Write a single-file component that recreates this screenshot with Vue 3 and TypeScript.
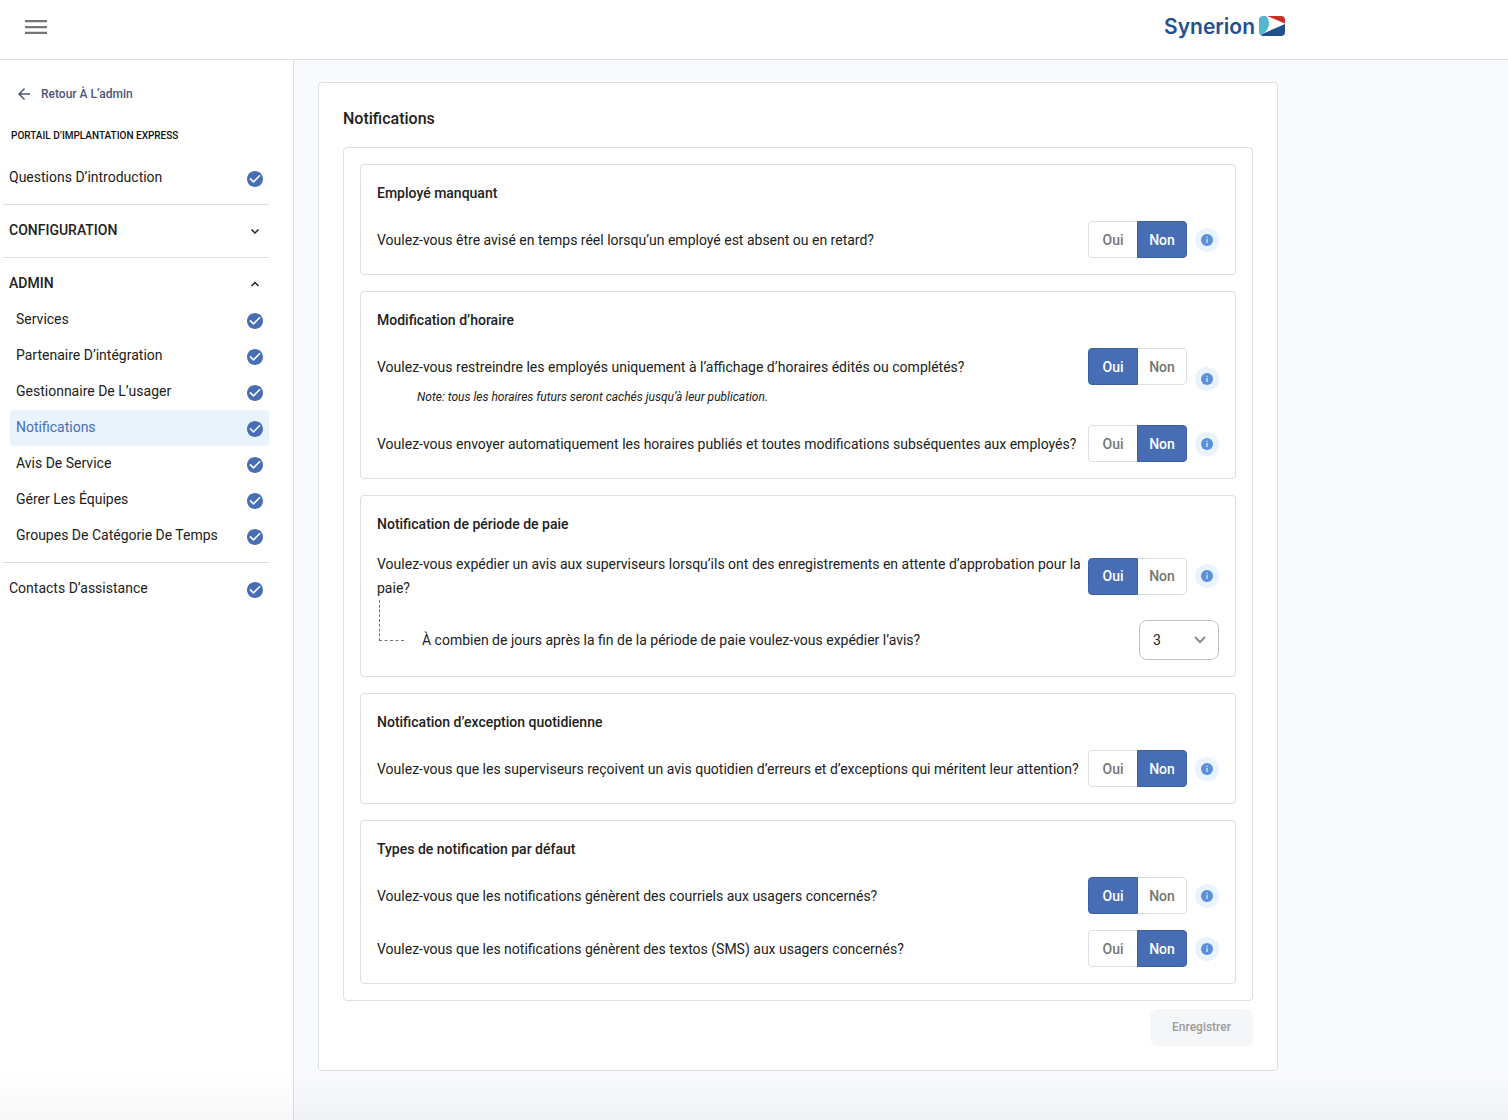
<script setup lang="ts">
import { reactive, ref } from 'vue'

interface NavItem {
  label: string
  active?: boolean
}

interface Question {
  id: string
  text: string
  note?: string
  followUp?: string
}

interface Group {
  title: string
  questions: Question[]
}

const adminItems: NavItem[] = [
  { label: 'Services' },
  { label: 'Partenaire D’intégration' },
  { label: 'Gestionnaire De L’usager' },
  { label: 'Notifications', active: true },
  { label: 'Avis De Service' },
  { label: 'Gérer Les Équipes' },
  { label: 'Groupes De Catégorie De Temps' },
]

const groups: Group[] = [
  {
    title: 'Employé manquant',
    questions: [
      {
        id: 'absence',
        text: 'Voulez-vous être avisé en temps réel lorsqu’un employé est absent ou en retard?',
      },
    ],
  },
  {
    title: 'Modification d’horaire',
    questions: [
      {
        id: 'restrict',
        text: 'Voulez-vous restreindre les employés uniquement à l’affichage d’horaires édités ou complétés?',
        note: 'Note: tous les horaires futurs seront cachés jusqu’à leur publication.',
      },
      {
        id: 'publish',
        text: 'Voulez-vous envoyer automatiquement les horaires publiés et toutes modifications subséquentes aux employés?',
      },
    ],
  },
  {
    title: 'Notification de période de paie',
    questions: [
      {
        id: 'payroll',
        text: 'Voulez-vous expédier un avis aux superviseurs lorsqu’ils ont des enregistrements en attente d’approbation pour la paie?',
        followUp: 'À combien de jours après la fin de la période de paie voulez-vous expédier l’avis?',
      },
    ],
  },
  {
    title: 'Notification d’exception quotidienne',
    questions: [
      {
        id: 'exceptions',
        text: 'Voulez-vous que les superviseurs reçoivent un avis quotidien d’erreurs et d’exceptions qui méritent leur attention?',
      },
    ],
  },
  {
    title: 'Types de notification par défaut',
    questions: [
      {
        id: 'email',
        text: 'Voulez-vous que les notifications génèrent des courriels aux usagers concernés?',
      },
      {
        id: 'sms',
        text: 'Voulez-vous que les notifications génèrent des textos (SMS) aux usagers concernés?',
      },
    ],
  },
]

const answers = reactive<Record<string, boolean>>({
  absence: false,
  restrict: true,
  publish: false,
  payroll: true,
  exceptions: false,
  email: true,
  sms: false,
})

const delay = ref('3')
const checkPath =
  'M12 2C6.48 2 2 6.48 2 12s4.48 10 10 10 10-4.48 10-10S17.52 2 12 2zm-2 15-5-5 1.41-1.41L10 14.17l7.59-7.59L19 8l-9 9z'
</script>

<template>
  <div class="page">
    <header class="topbar">
      <button class="menu" type="button" aria-label="Menu">
        <svg viewBox="0 0 22 14" width="22" height="14" fill="#757575">
          <path d="M0 0h22v2.300H0zM0 5.900h22v2.300H0zM0 11.700h22v2.300H0z" />
        </svg>
      </button>
      <a class="brand" href="#">
        <span>Synerion</span>
        <svg viewBox="0 0 26 20" width="26" height="20" aria-hidden="true">
          <path d="M6 0H22a4 4 0 0 1 4 4v3.500L8 0z" fill="#cb3027" />
          <path d="M26 8v8a4 4 0 0 1-4 4H4L1 19z" fill="#214f8c" />
          <path d="M4 0h3c3 3 4 8 2 12-1 3-4 5-7 7.500A4 4 0 0 1 0 16V4a4 4 0 0 1 4-4z" fill="#54b7cf" />
        </svg>
      </a>
    </header>

    <div class="body">
      <nav class="sidebar">
        <a class="back" href="#">
          <svg viewBox="4 4 16 16" width="12" height="12" fill="#4d5478" aria-hidden="true">
            <path d="M20 11H7.830l5.590-5.590L12 4l-8 8 8 8 1.410-1.410L7.830 13H20v-2z" />
          </svg>
          Retour À L’admin
        </a>
        <h2 class="portal">PORTAIL D’IMPLANTATION EXPRESS</h2>

        <a class="item" href="#">
          <span class="label">Questions D’introduction</span>
          <svg class="check" viewBox="2 2 20 20"><path :d="checkPath" /></svg>
        </a>
        <hr />
        <button class="item section" type="button" aria-expanded="false">
          <span class="label">CONFIGURATION</span>
          <svg class="caret" viewBox="0 0 16 16"><path d="M4.500 6.500 8 10l3.500-3.500" /></svg>
        </button>
        <hr />
        <button class="item section" type="button" aria-expanded="true">
          <span class="label">ADMIN</span>
          <svg class="caret" viewBox="0 0 16 16"><path d="M4.500 10 8 6.500l3.500 3.500" /></svg>
        </button>
        <a
          v-for="item in adminItems"
          :key="item.label"
          href="#"
          class="item sub"
          :class="{ active: item.active }"
        >
          <span class="label">{{ item.label }}</span>
          <svg class="check" viewBox="2 2 20 20"><path :d="checkPath" /></svg>
        </a>
        <hr />
        <a class="item" href="#">
          <span class="label">Contacts D’assistance</span>
          <svg class="check" viewBox="2 2 20 20"><path :d="checkPath" /></svg>
        </a>
      </nav>

      <main class="main">
        <form class="card" @submit.prevent>
          <h1>Notifications</h1>
          <div class="panel">
            <section v-for="group in groups" :key="group.title" class="group">
              <h3>{{ group.title }}</h3>
              <template v-for="q in group.questions" :key="q.id">
                <div class="row" :class="{ noted: q.note }">
                  <div class="question">
                    <p :id="q.id" class="text">{{ q.text }}</p>
                    <p v-if="q.note" class="note">{{ q.note }}</p>
                  </div>
                  <div class="toggle" role="group" :aria-labelledby="q.id">
                    <button type="button" :aria-pressed="answers[q.id]" @click="answers[q.id] = true">
                      Oui
                    </button>
                    <button type="button" :aria-pressed="!answers[q.id]" @click="answers[q.id] = false">
                      Non
                    </button>
                  </div>
                  <button class="info" type="button" aria-label="Information">
                    <svg viewBox="0 0 12 12" width="12" height="12">
                      <circle cx="6" cy="6" r="6" fill="#5a8fdb" />
                      <path d="M5.400 2.800h1.200v1.200H5.400zM5.400 5h1.200v4H5.400z" fill="#e8f3fc" />
                    </svg>
                  </button>
                </div>
                <div v-if="q.followUp" class="follow">
                  <span class="branch"></span>
                  <label for="delay">{{ q.followUp }}</label>
                  <span class="select">
                    <select id="delay" v-model="delay">
                      <option v-for="n in 7" :key="n" :value="String(n)">{{ n }}</option>
                    </select>
                    <svg viewBox="0 0 12 8" width="12" height="8" aria-hidden="true">
                      <path d="M1 1l5 5 5-5" />
                    </svg>
                  </span>
                </div>
              </template>
            </section>
          </div>
          <button class="save" type="submit" disabled>Enregistrer</button>
        </form>
      </main>
    </div>
  </div>
</template>

<style>
body {
  margin: 0;
}
</style>

<style scoped>
.page {
  position: relative;
  display: flex;
  flex-direction: column;
  min-height: 100vh;
  background: #f9fafe;
  color: #212121;
  font-family: Roboto, 'Liberation Sans', sans-serif;
  font-size: 14px;
  line-height: 24px;
}

.page::after {
  content: '';
  position: absolute;
  inset: auto 0 0;
  height: 48px;
  background: linear-gradient(rgba(0, 0, 0, 0), rgba(0, 0, 0, 0.03));
  pointer-events: none;
}

.page *,
.page *::before {
  box-sizing: border-box;
}

button {
  font: inherit;
  cursor: pointer;
}

a {
  color: inherit;
  text-decoration: none;
}

h1,
h2,
h3,
p {
  margin: 0;
  font-weight: 500;
}

.topbar {
  display: flex;
  align-items: center;
  justify-content: space-between;
  height: 60px;
  padding: 0 223px 5px 25px;
  border-bottom: 1px solid #dcdee0;
  background: #fff;
}

.menu {
  display: flex;
  padding: 0;
  border: 0;
  background: none;
}

.brand {
  display: flex;
  align-items: center;
  gap: 4px;
  color: #22508f;
  font-family: Inter, sans-serif;
  font-size: 21px;
  font-weight: 600;
}

.brand svg {
  margin-bottom: 2px;
}

.body {
  display: flex;
  flex: 1;
}

.sidebar {
  flex: none;
  width: 294px;
  padding: 22px 24px 24px 3px;
  border-right: 1px solid #dcdee0;
  background: #fff;
}

.back {
  display: flex;
  align-items: center;
  gap: 11px;
  padding-left: 15px;
  color: #4d5478;
  font-size: 12px;
  font-weight: 500;
}

.portal {
  margin: 18px 0 12px;
  padding-left: 8px;
  color: #111;
  font-size: 10px;
}

.item {
  display: flex;
  align-items: center;
  justify-content: space-between;
  width: 100%;
  height: 36px;
  padding: 0 6px;
  border: 0;
  border-radius: 4px;
  background: none;
  color: #212121;
}

.label {
  padding-bottom: 2px;
}

.section {
  font-weight: 500;
}

.sub {
  width: auto;
  margin-left: 7px;
}

.active {
  background: #e8f3fc;
  color: #476eb5;
}

.check {
  width: 16px;
  height: 16px;
  margin-top: 2px;
  fill: #476eb5;
}

.caret {
  width: 16px;
  height: 16px;
  fill: none;
  stroke: #212121;
  stroke-width: 1.5;
}

hr {
  height: 1px;
  margin: 8px 0;
  border: 0;
  background: #dcdee0;
}

.main {
  flex: 1;
  min-width: 0;
  padding: 22px 24px 48px;
}

.card {
  display: flex;
  flex-direction: column;
  max-width: 960px;
  padding: 24px;
  border: 1px solid #dcdee0;
  border-radius: 4px;
  background: #fff;
}

h1 {
  margin-bottom: 16px;
  font-size: 16px;
}

.panel {
  display: flex;
  flex-direction: column;
  gap: 16px;
  padding: 16px;
  border: 1px solid #dcdee0;
  border-radius: 4px;
}

.group {
  padding: 16px;
  border: 1px solid #dcdee0;
  border-radius: 4px;
}

h3 {
  font-size: 14px;
}

.row {
  display: flex;
  align-items: center;
  margin-top: 16px;
}

.question {
  flex: 1;
  padding-right: 4px;
}

.text {
  font-weight: 400;
}

.noted {
  align-items: flex-start;
}

.noted .text {
  padding: 7px 0 6px;
}

.note {
  padding-left: 40px;
  font-size: 12px;
  font-style: italic;
  font-weight: 400;
}

.toggle {
  display: flex;
  margin-right: 8px;
}

.toggle button {
  width: 50px;
  height: 37px;
  padding: 0;
  border: 1px solid #dcdee0;
  border-radius: 4px 0 0 4px;
  background: #fff;
  color: #757575;
  font-weight: 500;
}

.toggle button + button {
  margin-left: -1px;
  border-radius: 0 4px 4px 0;
}

.toggle button[aria-pressed='true'] {
  z-index: 1;
  border-color: #3c60a3;
  background: #476eb5;
  color: #fff;
}

.info {
  display: flex;
  align-items: center;
  align-self: center;
  justify-content: center;
  width: 24px;
  height: 24px;
  padding: 0;
  border: 0;
  border-radius: 50%;
  background: #e8f3fc;
}

.follow {
  display: flex;
  align-items: center;
  margin-top: 20px;
}

.branch {
  align-self: flex-start;
  width: 25px;
  height: 41px;
  margin: -20px 18px 0 2px;
  border: dashed #757575;
  border-width: 0 0 1px 1px;
}

.follow label {
  flex: 1;
}

.select {
  display: grid;
  align-items: center;
  width: 80px;
}

.select > * {
  grid-area: 1 / 1;
}

select {
  width: 100%;
  height: 40px;
  padding: 0 13px;
  border: 1px solid #c2c2c2;
  border-radius: 8px;
  background: #fff;
  color: #212121;
  font: inherit;
  appearance: none;
}

.select svg {
  justify-self: end;
  margin-right: 13px;
  fill: none;
  stroke: #8c8c8c;
  stroke-width: 2;
  pointer-events: none;
}

.save {
  align-self: flex-end;
  width: 103px;
  height: 37px;
  margin-top: 8px;
  padding: 0 0 2px;
  border: 0;
  border-radius: 8px;
  background: #f5f6f8;
  color: #9a9b9d;
  font-size: 12px;
  font-weight: 500;
}
</style>
